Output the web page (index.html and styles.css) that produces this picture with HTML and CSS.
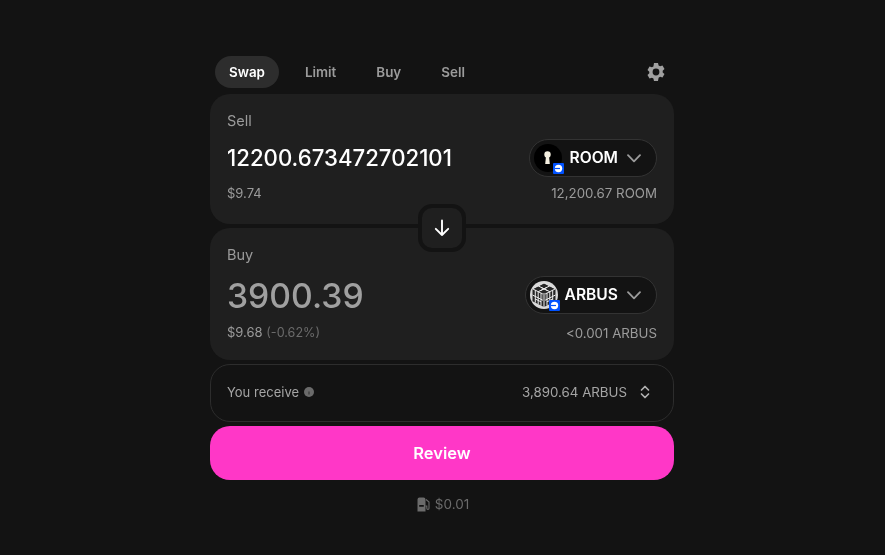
FILE: index.html
```html
<!DOCTYPE html>
<html dir="ltr" lang="en">

<head>
  <meta charset="utf-8" />
  <title>Swap</title>
  <link rel="stylesheet" href="styles.css">
</head>

<body>
  <main class="swap">
    <div class="tabs">
      <span class="tab active">Swap</span>
      <span class="tab">Limit</span>
      <span class="tab">Buy</span>
      <span class="tab">Sell</span>
      <svg class="gear" viewBox="0 0 20 20" width="20" height="20">
        <path fill="#a0a0a0" fill-rule="evenodd" d="M8 1h4l.6 2.4 1.5.9 2.4-.7 2 3.4-1.800 1.700v1.700l1.800 1.700-2 3.400-2.400-.7-1.500.9L12 19H8l-.6-2.400-1.500-.9-2.400.7-2-3.400 1.800-1.700V9.700L1.500 8l2-3.400 2.400.7 1.500-.9L8 1Zm2 5.600a3.400 3.400 0 1 0 0 6.800a3.400 3.400 0 0 0 0-6.800Z" />
      </svg>
    </div>

    <section class="card sell">
      <div class="label">Sell</div>
      <div class="row amount-row">
        <span class="amount">12200.673472702101</span>
        <button class="token">
          <span class="token-icon">
            <svg viewBox="0 0 28 28" width="28" height="28">
              <circle cx="14" cy="14" r="14" fill="#000" />
              <circle cx="13.500" cy="10.500" r="3.200" fill="#f4efe0" />
              <path fill="#f4efe0" d="M12 12h3l.8 8h-4.600z" />
            </svg>
            <svg class="chain" viewBox="0 0 11 11" width="11" height="11">
              <rect width="11" height="11" rx="1" fill="#0052ff" />
              <circle cx="5.500" cy="5.500" r="3.700" fill="#fff" />
              <rect x="1.500" y="4.900" width="5.500" height="1.200" fill="#0052ff" />
            </svg>
          </span>
          <span class="symbol">ROOM</span>
          <svg class="chevron" viewBox="0 0 14 9" width="14" height="9">
            <path d="M1 1.200 7 7.400l6-6.200" fill="none" stroke="#9b9b9b" stroke-width="1.800" stroke-linecap="round" stroke-linejoin="round" />
          </svg>
        </button>
      </div>
      <div class="row meta">
        <span>$9.74</span>
        <span class="balance">12,200.67 ROOM</span>
      </div>
    </section>

    <div class="flip">
      <svg viewBox="0 0 18 18" width="18" height="18">
        <path d="M9 1.500V16M2.800 9.800 9 16l6.200-6.200" fill="none" stroke="#fff" stroke-width="1.900" stroke-linecap="round" stroke-linejoin="round" />
      </svg>
    </div>

    <section class="card buy">
      <div class="label">Buy</div>
      <div class="row amount-row">
        <span class="amount big">3900.39</span>
        <button class="token">
          <span class="token-icon">
            <svg viewBox="0 0 28 28" width="28" height="28">
              <circle cx="14" cy="14" r="14" fill="#d9d9d9" />
              <path d="M14 2 25.500 7.800v12.400L14 26 2.500 20.200V7.800z" fill="#262626" />
              <path d="M14 2 25.500 7.800 14 13.600 2.500 7.800zM14 13.600V26M2.500 14 14 19.800 25.500 14M8.200 4.900 19.800 10.700M19.800 4.900 8.200 10.700M8.200 10.700v12.400M19.800 10.700v12.400M5.300 9.200v12.400M11 12.200v12.400M17 12.200v12.400M22.700 9.200v12.400M5.300 18 11 20.800M17 20.800 22.700 18M11 6.400 17 9.400M17 6.400 11 9.400" fill="none" stroke="#eee" stroke-width="1" />
              <path d="M14 12v8" stroke="#8a8a8a" stroke-width="3" />
            </svg>
            <svg class="chain" viewBox="0 0 11 11" width="11" height="11">
              <rect width="11" height="11" rx="1" fill="#0052ff" />
              <circle cx="5.500" cy="5.500" r="3.700" fill="#fff" />
              <rect x="1.500" y="4.900" width="5.500" height="1.200" fill="#0052ff" />
            </svg>
          </span>
          <span class="symbol">ARBUS</span>
          <svg class="chevron" viewBox="0 0 14 9" width="14" height="9">
            <path d="M1 1.200 7 7.400l6-6.200" fill="none" stroke="#9b9b9b" stroke-width="1.800" stroke-linecap="round" stroke-linejoin="round" />
          </svg>
        </button>
      </div>
      <div class="row meta">
        <span>$9.68 <span class="impact">(-0.62%)</span></span>
        <span class="balance">&lt;0.001 ARBUS</span>
      </div>
    </section>

    <div class="receive">
      <span class="receive-label">You receive
        <svg viewBox="0 0 10 10" width="10" height="10">
          <circle cx="5" cy="5" r="5" fill="#6b6b6b" />
          <path d="M5 4.500v3" stroke="#3a3a3a" stroke-width="1.200" />
        </svg>
      </span>
      <span class="receive-value">3,890.64 ARBUS
        <svg viewBox="0 0 12 16" width="12" height="16">
          <path d="M2.500 6 6 2.500 9.500 6M2.500 10 6 13.500 9.500 10" fill="none" stroke="#b0b0b0" stroke-width="1.700" stroke-linecap="round" stroke-linejoin="round" />
        </svg>
      </span>
    </div>

    <button class="review">Review</button>

    <div class="gas">
      <svg viewBox="0 0 13 15" width="13" height="15">
        <path fill="#6b6b6b" d="M.5 2.500A2 2 0 0 1 2.500.5h4a2 2 0 0 1 2 2V14.500H.5zM2.200 8v1.800h4.600V8z" />
        <path d="M9 2.500 12 5v6.300a1.100 1.100 0 0 1-2.200 0V9H8.500" fill="none" stroke="#6b6b6b" stroke-width="1.100" />
      </svg>
      <span>$0.01</span>
    </div>
  </main>
</body>

</html>
```

FILE: styles.css
```css
body {
  margin: 0;
  min-height: 555px;
  background: #131313;
  font-family: 'Inter', sans-serif;
  font-size: 14px;
  color: #9b9b9b;
  overflow: hidden;
}

.swap {
  position: relative;
  width: 464px;
  margin-left: 210px;
  padding-top: 56px;
  display: flex;
  flex-direction: column;
  will-change: transform;
}

.tabs {
  display: flex;
  align-items: center;
  gap: 12px;
  height: 32px;
  padding: 0 8px 0 5px;
  margin-bottom: 6px;
}

.tab {
  padding: 0 14px;
  line-height: 32px;
  font-size: 13.4px;
  font-weight: 600;
  border-radius: 16px;
}

.tab.active {
  color: #fff;
  background: #2d2d2d;
}

.gear {
  margin-left: auto;
}

.card {
  background: #1f1f1f;
  border-radius: 20px;
  padding: 17px 17px 0;
  box-sizing: border-box;
}

.sell {
  height: 130px;
  margin-bottom: 4px;
}

.buy {
  height: 132px;
  margin-bottom: 4px;
}

.label {
  font-size: 14.5px;
  line-height: 20px;
}

.row {
  display: flex;
  justify-content: space-between;
  align-items: center;
}

.amount-row {
  margin-top: 8px;
  height: 38px;
}

.amount {
  color: #fff;
  font-size: 22.2px;
  font-weight: 500;
  padding-bottom: 1px;
}

.amount.big {
  color: #a0a0a0;
  font-size: 33.7px;
  padding-bottom: 0;
}

.buy .amount-row {
  margin-top: 11px;
}

.token {
  display: flex;
  align-items: center;
  height: 38px;
  padding: 0 15px 0 4px;
  box-sizing: border-box;
  background: #131313;
  border: 1px solid #333;
  border-radius: 19px;
  font-family: inherit;
  color: #fff;
}

.token-icon {
  position: relative;
  width: 28px;
  height: 28px;
  margin-right: 7px;
}

.token-icon svg {
  display: block;
}

.token-icon .chain {
  position: absolute;
  right: -2px;
  bottom: -2px;
}

.symbol {
  font-size: 15.6px;
  font-weight: 600;
  padding-bottom: 1px;
  margin-right: 9px;
}

.meta {
  margin-top: 6px;
  font-size: 13px;
  line-height: 20px;
}

.buy .meta {
  margin-top: 8px;
}

.balance {
  font-size: 13.3px;
}

.impact {
  color: #6b6b6b;
  font-size: 12.6px;
}

.flip {
  position: absolute;
  left: 208px;
  top: 204px;
  width: 48px;
  height: 48px;
  box-sizing: border-box;
  background: #1f1f1f;
  border: 4px solid #131313;
  border-radius: 14px;
  display: flex;
  align-items: center;
  justify-content: center;
}

.receive {
  height: 58px;
  box-sizing: border-box;
  padding: 0 22px 2px 16px;
  margin-bottom: 4px;
  border: 1px solid #2d2d2d;
  border-radius: 20px;
  display: flex;
  justify-content: space-between;
  align-items: center;
  font-size: 13px;
  color: #a5a5a5;
}

.receive-label,
.receive-value {
  display: flex;
  align-items: center;
  gap: 5px;
}

.receive-value {
  gap: 12px;
  font-size: 13.3px;
}

.review {
  height: 54px;
  border: 0;
  border-radius: 20px;
  background: #ff37c7;
  color: #fff;
  font-family: inherit;
  font-size: 16.5px;
  font-weight: 600;
}

.gas {
  margin-top: 15px;
  padding-left: 2px;
  display: flex;
  justify-content: center;
  align-items: center;
  gap: 5px;
  color: #6b6b6b;
  font-size: 13.5px;
  line-height: 18px;
}
```
